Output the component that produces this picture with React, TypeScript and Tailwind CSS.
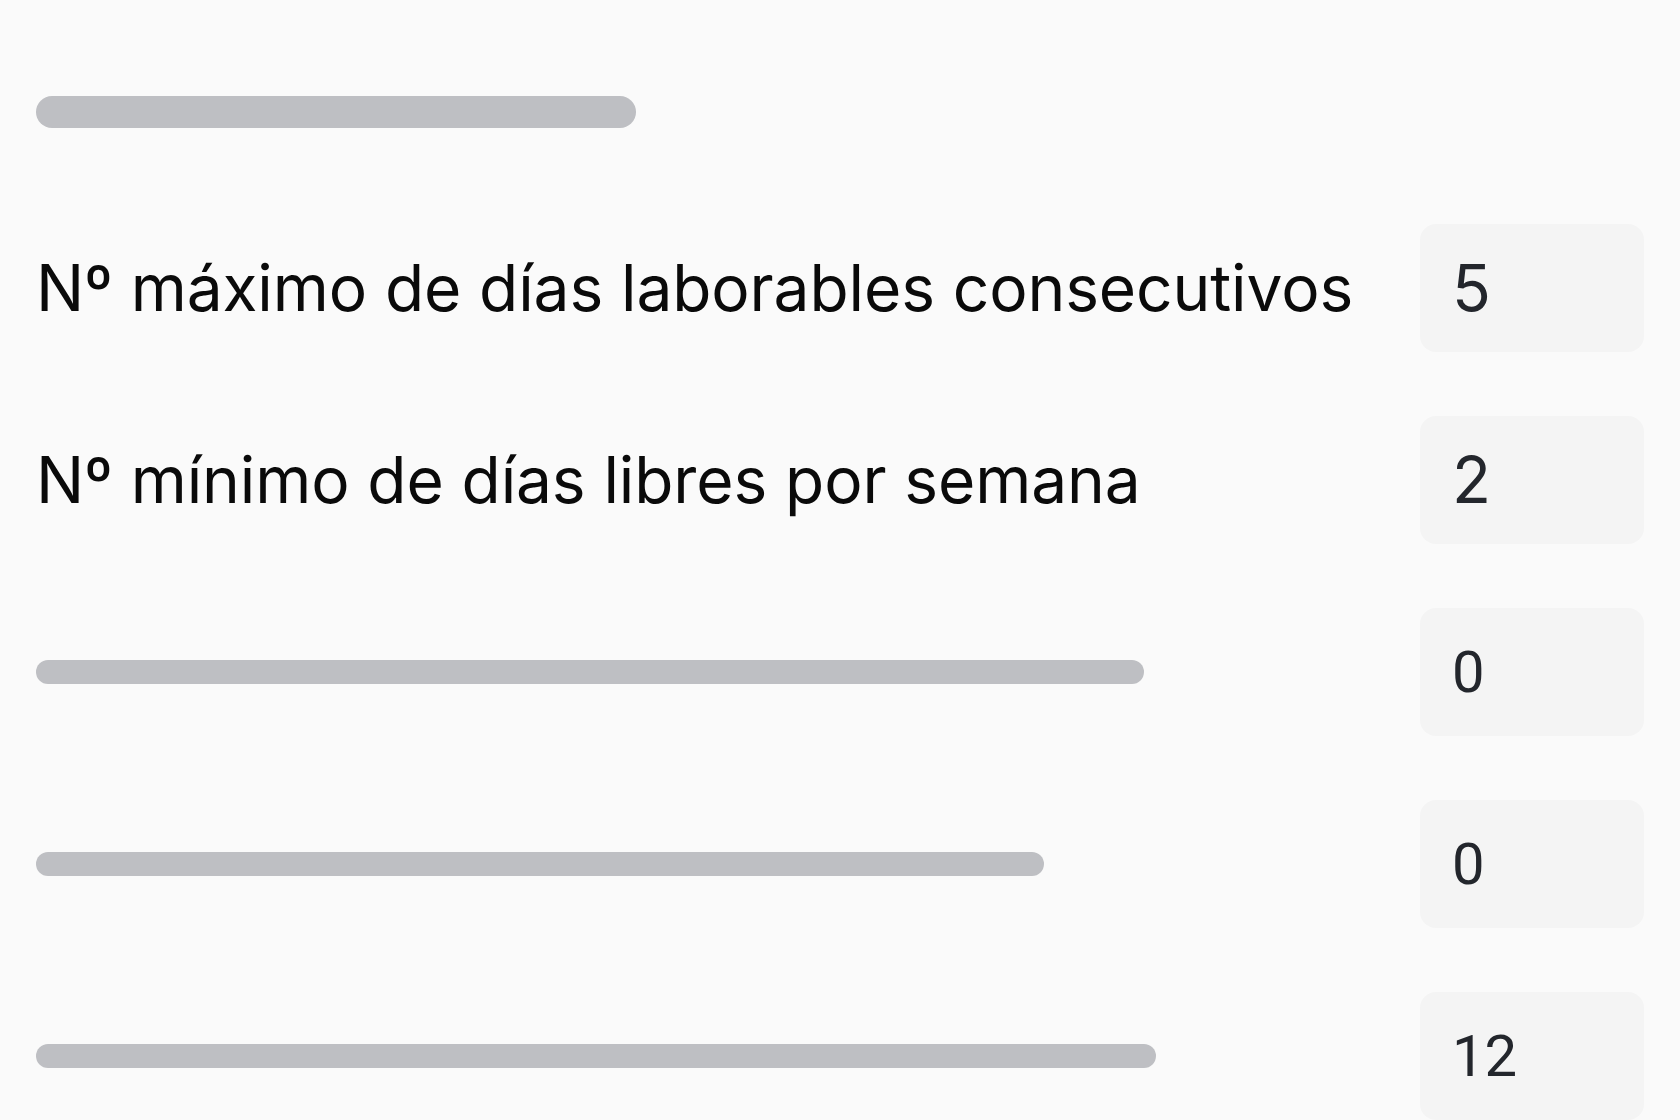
const rows: { label?: string; bar?: number; value: string; small?: boolean }[] = [
  { label: "Nº máximo de días laborables consecutivos", value: "5" },
  { label: "Nº mínimo de días libres por semana", value: "2" },
  { bar: 1108, value: "0", small: true },
  { bar: 1008, value: "0", small: true },
  { bar: 1120, value: "12", small: true },
];

export default function App() {
  return (
    <div
      className="min-h-screen bg-[#fafafa] px-9 pt-24"
      style={{ fontFamily: "Inter, 'Noto Sans', sans-serif" }}
    >
      <div className="h-8 w-[600px] rounded-full bg-[#bebfc3]" />
      <div className="mt-24 flex flex-col gap-16">
        {rows.map((row, i) => (
          <div key={i} className="flex h-32 items-center justify-between">
            {row.label ? (
              <span className="text-[64px] leading-none tracking-[-0.1px] text-[#0a0a0a]">{row.label}</span>
            ) : (
              <div className="h-6 rounded-full bg-[#bebfc3]" style={{ width: row.bar }} />
            )}
            <div
              className={
                row.small
                  ? "flex h-32 w-56 items-center rounded-2xl bg-[#f4f4f4] px-8 font-['Roboto',sans-serif] text-[58px] leading-none text-[#23262c]"
                  : "flex h-32 w-56 items-center rounded-2xl bg-[#f4f4f4] px-8 text-[64px] leading-none text-[#23262c]"
              }
            >
              {row.value}
            </div>
          </div>
        ))}
      </div>
    </div>
  );
}
